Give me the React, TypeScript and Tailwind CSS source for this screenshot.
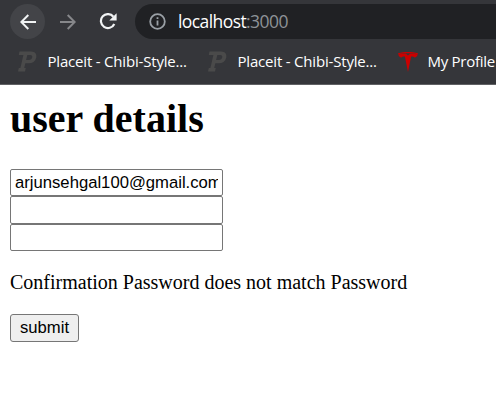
import React from "react";

function PlaceitIcon() {
  return (
    <svg width="20" height="21" viewBox="0 0 20 21" className="shrink-0" fill="#4a4a4a">
      <path
        fillRule="evenodd"
        d="M1.500.5h11.500c4.300 0 6 2.800 5.200 6.200-.9 3.700-3.700 5.600-7.500 5.600H7.300L6.200 17h1.600l-.8 3.500H0L.8 17h1.600L5.400 4H.8zM9.300 4 8.100 9h2.700c1.900 0 3.100-.9 3.400-2.500C14.600 4.900 13.900 4 12.200 4z"
      />
    </svg>
  );
}

function TeslaIcon() {
  return (
    <svg width="20" height="20" viewBox="0 0 20 20" className="shrink-0" fill="#cc0000">
      <path d="M0 1.200C6-.3 14-.3 20 1.200l-.5 1.200C14 1 6 1 .5 2.400z" />
      <path d="M.3 2.600C2.600 1.900 5 1.600 7.600 1.600L10 3.600l2.400-2c2.600 0 5 .3 7.300 1-.5 1.700-1.600 2.800-3 3-.5-.9-1.500-1.200-3.600-1.200L10 20 6.900 4.400c-2.100 0-3.100.3-3.600 1.200C1.900 5.400.8 4.300.3 2.600z" />
    </svg>
  );
}

function Bookmark({ icon, label, className }: { icon: React.ReactNode; label: string; className: string }) {
  return (
    <div className={`flex shrink-0 items-center ${className}`}>
      {icon}
      <span className="ml-[9.500px] whitespace-nowrap">{label}</span>
    </div>
  );
}

function BrowserBar() {
  return (
    <header className="h-[85px] overflow-hidden border-b border-[#606164] bg-[#35363a] pt-1 font-['Open_Sans',sans-serif]">
      <div className="flex h-[35px] items-center pl-[10px]">
        <div className="flex size-[35px] shrink-0 items-center justify-center rounded-full bg-[#434448]">
          <svg width="16" height="16" viewBox="0 0 16 16" fill="none" stroke="#f1f3f4" strokeWidth="2">
            <path d="M16 8H1.500M8.300 1 1.300 8l7 7" />
          </svg>
        </div>
        <svg width="16" height="16" viewBox="0 0 16 16" fill="none" stroke="#86878a" strokeWidth="2" className="ml-[15px] shrink-0">
          <path d="M0 8h14.500M7.700 1l7 7-7 7" />
        </svg>
        <svg width="18" height="17" viewBox="0 0 18 17" fill="none" stroke="#f1f3f4" strokeWidth="2.200" className="ml-[23px] shrink-0">
          <path d="M14.400 3.700A7 7 0 1 0 15.300 11" />
          <path d="M17.600.2v7.300h-7.300z" fill="#f1f3f4" stroke="none" />
        </svg>
        <div className="ml-[18px] flex h-full flex-1 items-center rounded-l-full bg-[#202124] pl-[14px]">
          <svg width="17" height="17" viewBox="0 0 17 17" fill="none" stroke="#9aa0a6" strokeWidth="1.800" className="shrink-0">
            <circle cx="8.500" cy="8.500" r="7.300" />
            <path d="M8.500 7.600v5M8.500 4.200V6" />
          </svg>
          <span className="-mt-0.5 ml-3 text-[17.500px] leading-6 tracking-[-0.580px] text-white">
            localhost<span className="text-[#8d9297]">:3000</span>
          </span>
        </div>
      </div>
      <nav className="flex h-[45px] items-center pl-[18px] text-[15px] tracking-[-0.190px] text-white">
        <Bookmark className="w-[190px]" icon={<PlaceitIcon />} label="Placeit - Chibi-Style..." />
        <Bookmark className="w-[190px]" icon={<PlaceitIcon />} label="Placeit - Chibi-Style..." />
        <Bookmark className="w-[100px] tracking-[-0.280px]" icon={<TeslaIcon />} label="My Profile" />
      </nav>
    </header>
  );
}

export default function App() {
  const inputClass =
    "block w-[213px] rounded-[2px] border border-[#767676] bg-white px-1 font-['Liberation_Sans',sans-serif] text-[16.667px] leading-5 text-black outline-none";
  return (
    <div className="h-[410px] overflow-hidden bg-white font-['Liberation_Serif',serif] text-black">
      <BrowserBar />
      <main className="pl-[10px] pt-[11px]">
        <h1 className="text-[40px] font-bold leading-[46px]">user details</h1>
        <form className="mt-[27px]" onSubmit={(e) => e.preventDefault()}>
          <input className={`${inputClass} h-[27px]`} defaultValue="arjunsehgal100@gmail.com" />
          <input className={`${inputClass} h-[28px]`} type="password" />
          <input className={`${inputClass} h-[27px]`} type="password" />
          <p className="mt-5 text-[20px] leading-[23px]">Confirmation Password does not match Password</p>
          <button className="mt-5 flex h-[28px] w-[69px] items-center justify-center rounded-[3px] border border-[#767676] bg-[#efefef] font-['Liberation_Sans',sans-serif] text-[16.667px] leading-5">
            submit
          </button>
        </form>
      </main>
    </div>
  );
}
